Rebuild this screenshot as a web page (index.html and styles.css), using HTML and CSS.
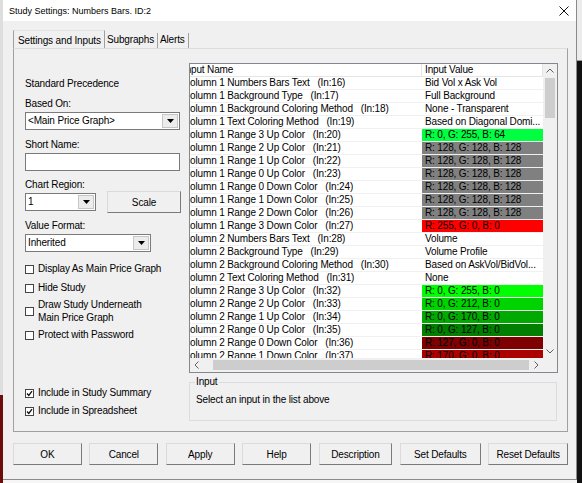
FILE: index.html
```html
<!DOCTYPE html>
<html lang="en">

<head>
    <meta charset="UTF-8">
    <title>Study Settings</title>

    <link rel="stylesheet" href="styles.css">
</head>

<body>

    <div class="window">
        <div class="titlebar">
            <span>Study Settings: Numbers Bars. ID:2</span>
            <svg class="close" width="10" height="10" viewBox="0 0 10 10">
                <path d="M0.5 0.5 L9.5 9.5 M9.5 0.5 L0.5 9.5" stroke="#111" stroke-width="1" fill="none" />
            </svg>
        </div>

        <div class="content">
            <!-- tabs -->
            <div class="tabs">
                <div class="tab active">Settings and Inputs</div>
                <div class="tab">Subgraphs</div>
                <div class="tab">Alerts</div>
            </div>

            <div class="panel">
                <!-- left column -->
                <div class="left">
                    <div class="label">Standard Precedence</div>
                    <div class="label based-on">Based On:</div>
                    <div class="combo combo-wide">
                        <span class="combo-text">&lt;Main Price Graph&gt;</span>
                        <span class="combo-btn"><svg width="7" height="4" viewBox="0 0 7 4"><polygon points="0,0 7,0 3.5,4" fill="#000" /></svg></span>
                    </div>
                    <div class="label short-name">Short Name:</div>
                    <div class="textbox"></div>
                    <div class="label chart-region">Chart Region:</div>
                    <div class="region-row">
                        <div class="combo combo-small">
                            <span class="combo-text">1</span>
                            <span class="combo-btn"><svg width="7" height="4" viewBox="0 0 7 4"><polygon points="0,0 7,0 3.5,4" fill="#000" /></svg></span>
                        </div>
                        <div class="btn scale-btn">Scale</div>
                    </div>
                    <div class="label value-format">Value Format:</div>
                    <div class="combo combo-mid">
                        <span class="combo-text">Inherited</span>
                        <span class="combo-btn"><svg width="7" height="4" viewBox="0 0 7 4"><polygon points="0,0 7,0 3.5,4" fill="#000" /></svg></span>
                    </div>

                    <div class="check first-check"><span class="box"></span>Display As Main Price Graph</div>
                    <div class="check"><span class="box"></span>Hide Study</div>
                    <div class="check two-line"><span class="box"></span><span>Draw Study Underneath<br>Main Price Graph</span></div>
                    <div class="check protect"><span class="box"></span>Protect with Password</div>

                    <div class="check summary"><span class="box"><svg width="7" height="7" viewBox="0 0 7 7"><polyline points="1,3.5 2.8,5.5 6,1.2" stroke="#111" stroke-width="1.3" fill="none" /></svg></span>Include in Study Summary</div>
                    <div class="check spreadsheet"><span class="box"><svg width="7" height="7" viewBox="0 0 7 7"><polyline points="1,3.5 2.8,5.5 6,1.2" stroke="#111" stroke-width="1.3" fill="none" /></svg></span>Include in Spreadsheet</div>
                </div>

                <!-- right column -->
                <div class="right">
                    <div class="listview">
                        <div class="list-area">
                            <div class="sheet">
                                <div class="row head">
                                    <div class="name">Input Name</div>
                                    <div class="value">Input Value</div>
                                </div>
                                <div class="row"><div class="name">Column 1 Numbers Bars Text   (In:16)</div><div class="value">Bid Vol x Ask Vol</div></div>
                                <div class="row"><div class="name">Column 1 Background Type   (In:17)</div><div class="value">Full Background</div></div>
                                <div class="row"><div class="name">Column 1 Background Coloring Method   (In:18)</div><div class="value">None - Transparent</div></div>
                                <div class="row"><div class="name">Column 1 Text Coloring Method   (In:19)</div><div class="value">Based on Diagonal Domi...</div></div>
                                <div class="row"><div class="name">Column 1 Range 3 Up Color   (In:20)</div><div class="value" style="background:#00ff40">R: 0, G: 255, B: 64</div></div>
                                <div class="row"><div class="name">Column 1 Range 2 Up Color   (In:21)</div><div class="value" style="background:#808080">R: 128, G: 128, B: 128</div></div>
                                <div class="row"><div class="name">Column 1 Range 1 Up Color   (In:22)</div><div class="value" style="background:#808080">R: 128, G: 128, B: 128</div></div>
                                <div class="row"><div class="name">Column 1 Range 0 Up Color   (In:23)</div><div class="value" style="background:#808080">R: 128, G: 128, B: 128</div></div>
                                <div class="row"><div class="name">Column 1 Range 0 Down Color   (In:24)</div><div class="value" style="background:#808080">R: 128, G: 128, B: 128</div></div>
                                <div class="row"><div class="name">Column 1 Range 1 Down Color   (In:25)</div><div class="value" style="background:#808080">R: 128, G: 128, B: 128</div></div>
                                <div class="row"><div class="name">Column 1 Range 2 Down Color   (In:26)</div><div class="value" style="background:#808080">R: 128, G: 128, B: 128</div></div>
                                <div class="row"><div class="name">Column 1 Range 3 Down Color   (In:27)</div><div class="value" style="background:#ff0000">R: 255, G: 0, B: 0</div></div>
                                <div class="row"><div class="name">Column 2 Numbers Bars Text   (In:28)</div><div class="value">Volume</div></div>
                                <div class="row"><div class="name">Column 2 Background Type   (In:29)</div><div class="value">Volume Profile</div></div>
                                <div class="row"><div class="name">Column 2 Background Coloring Method   (In:30)</div><div class="value">Based on AskVol/BidVol...</div></div>
                                <div class="row"><div class="name">Column 2 Text Coloring Method   (In:31)</div><div class="value">None</div></div>
                                <div class="row"><div class="name">Column 2 Range 3 Up Color   (In:32)</div><div class="value" style="background:#00ff00">R: 0, G: 255, B: 0</div></div>
                                <div class="row"><div class="name">Column 2 Range 2 Up Color   (In:33)</div><div class="value" style="background:#00d400">R: 0, G: 212, B: 0</div></div>
                                <div class="row"><div class="name">Column 2 Range 1 Up Color   (In:34)</div><div class="value" style="background:#00aa00">R: 0, G: 170, B: 0</div></div>
                                <div class="row"><div class="name">Column 2 Range 0 Up Color   (In:35)</div><div class="value" style="background:#007f00">R: 0, G: 127, B: 0</div></div>
                                <div class="row"><div class="name">Column 2 Range 0 Down Color   (In:36)</div><div class="value" style="background:#7f0000">R: 127, G: 0, B: 0</div></div>
                                <div class="row"><div class="name">Column 2 Range 1 Down Color   (In:37)</div><div class="value" style="background:#aa0000">R: 170, G: 0, B: 0</div></div>
                            </div>
                        </div>

                        <!-- vertical scrollbar -->
                        <div class="vscroll">
                            <div class="arrow"><svg width="14" height="14" viewBox="0 0 14 14"><polyline points="3.5,8.5 7,5 10.5,8.5" stroke="#606060" fill="none" /></svg></div>
                            <div class="vtrack"><div class="vthumb"></div></div>
                            <div class="arrow"><svg width="14" height="14" viewBox="0 0 14 14"><polyline points="3.5,5.5 7,9 10.5,5.5" stroke="#606060" fill="none" /></svg></div>
                        </div>

                        <!-- horizontal scrollbar -->
                        <div class="hscroll">
                            <div class="arrow"><svg width="14" height="14" viewBox="0 0 14 14"><polyline points="8.5,3.5 5,7 8.5,10.5" stroke="#606060" fill="none" /></svg></div>
                            <div class="htrack"><div class="hthumb"></div></div>
                            <div class="arrow"><svg width="14" height="14" viewBox="0 0 14 14"><polyline points="5.5,3.5 9,7 5.5,10.5" stroke="#606060" fill="none" /></svg></div>
                        </div>
                        <div class="corner"></div>
                    </div>

                    <fieldset class="input-group">
                        <legend>Input</legend>
                        <div class="hint">Select an input in the list above</div>
                    </fieldset>
                </div>
            </div>

            <!-- bottom buttons -->
            <div class="buttons">
                <div class="btn">OK</div>
                <div class="btn">Cancel</div>
                <div class="btn">Apply</div>
                <div class="btn">Help</div>
                <div class="btn btn-desc">Description</div>
                <div class="btn btn-set">Set Defaults</div>
                <div class="btn btn-reset">Reset Defaults</div>
            </div>
        </div>
    </div>

</body>

</html>
```

FILE: styles.css
```css
* {
    box-sizing: border-box;
}

body {
    margin: 0;
    width: 582px;
    height: 483px;
    overflow: hidden;
    font-family: "Liberation Sans", Arial, sans-serif;
    font-size: 10px;
    letter-spacing: -0.15px;
    color: #000;
    background:
        linear-gradient(#dedede 0 395px, #6e0b0b 395px) left top / 3px 100% no-repeat,
        linear-gradient(#ececec 0 60px, #9a9a9a 60px 61px, #111 61px) right top / 5px 100% no-repeat,
        #f6f6f6;
}

/* window frame */
.window {
    margin-left: 3px;
    width: 574px;
    height: 480px;
    background: #f0f0f0;
    border-right: 1px solid #8a8a8a;
    border-bottom: 1px solid #8a8a8a;
}

.titlebar {
    height: 21px;
    background: #fff;
    display: flex;
    align-items: center;
    justify-content: space-between;
    padding: 0 7px 0 6px;
    font-size: 9px;
    letter-spacing: 0;
}

.content {
    padding: 9px 8px 0 10px;
}

/* tabs */
.tabs {
    height: 18px;
    display: flex;
    align-items: flex-end;
}

.tab {
    height: 15px;
    line-height: 14px;
    padding: 0 3px 0 2px;
    border-right: 1px solid #a0a0a0;
}

.tab.active {
    width: 92px;
    height: 18px;
    line-height: 20px;
    padding-left: 4px;
    border-left: 1px solid #a0a0a0;
    border-top: 1px solid #e3e3e3;
}

/* main panel */
.panel {
    height: 384px;
    display: flex;
    gap: 8px;
    padding: 0 9px 0 11px;
    border: 1px solid #a0a0a0;
    border-top-color: #dddddd;
}

.left {
    width: 156px;
    padding-top: 29px;
    display: flex;
    flex-direction: column;
}

.label {
    line-height: 12px;
}

.based-on {
    margin-top: 8px;
}

.short-name {
    margin-top: 9px;
}

.chart-region {
    margin-top: 8px;
}

.value-format {
    margin-top: 7px;
}

.combo {
    height: 18px;
    margin-top: 2px;
    display: flex;
    background: #fff;
    border: 1px solid #7a7a7a;
}

.combo-wide {
    width: 155px;
}

.combo-small {
    width: 71px;
    margin-top: 0;
}

.combo-mid {
    width: 126px;
}

.combo-text {
    flex: 1;
    line-height: 16px;
    padding-left: 2px;
}

.combo-btn {
    width: 16px;
    display: flex;
    align-items: center;
    justify-content: center;
    margin: 1px;
    background: #ececec;
    border: 1px solid #c6c6c6;
}

.textbox {
    width: 155px;
    height: 18px;
    margin-top: 2px;
    background: #fff;
    border: 1px solid #7a7a7a;
}

.region-row {
    height: 22px;
    display: flex;
    align-items: center;
    justify-content: space-between;
}

.btn {
    display: flex;
    align-items: center;
    justify-content: center;
    background: #f0f0f0;
    border: 1px solid;
    border-color: #dadada #7a7a7a #7a7a7a #dadada;
}

.scale-btn {
    width: 74px;
    height: 22px;
}

/* checkboxes */
.check {
    display: flex;
    align-items: center;
    gap: 4px;
    line-height: 12px;
    margin-top: 7px;
}

.check .box {
    width: 9px;
    height: 9px;
    flex: none;
    display: flex;
    align-items: center;
    justify-content: center;
    background: #fff;
    border: 1px solid #444;
}

.first-check {
    margin-top: 11px;
}

.two-line {
    margin-top: 4px;
    line-height: 13px;
}

.protect {
    margin-top: 5px;
}

.summary {
    margin-top: 46px;
}

.spreadsheet {
    margin-top: 6px;
}

/* list of inputs */
.right {
    width: 369px;
    padding-top: 14px;
}

.listview {
    width: 369px;
    height: 310px;
    display: grid;
    grid-template-columns: 353px 14px;
    grid-template-rows: 294px 14px;
    border: 1px solid #828790;
    background: #fff;
}

.list-area {
    overflow: hidden;
}

.sheet {
    margin-left: -10px;
    width: 363px;
}

.row {
    height: 13px;
    display: flex;
    border-bottom: 1px solid #f0f0f0;
    line-height: 12px;
    white-space: pre;
}

.row .name {
    width: 242px;
    padding-left: 3px;
    overflow: hidden;
}

.row .value {
    width: 121px;
    padding-left: 3px;
    overflow: hidden;
}

.row.head {
    border-bottom-color: #e5e5e5;
}

.row.head .name,
.row.head .value {
    border-right: 1px solid #e5e5e5;
}

.vscroll {
    display: flex;
    flex-direction: column;
    background: #f0f0f0;
}

.arrow {
    width: 14px;
    height: 14px;
    flex: none;
}

.vtrack {
    flex: 1;
}

.vthumb {
    width: 10px;
    height: 40px;
    margin-left: 2px;
    background: #cdcdcd;
}

.hscroll {
    display: flex;
    background: #f0f0f0;
}

.htrack {
    flex: 1;
    display: flex;
    align-items: center;
}

.hthumb {
    width: 316px;
    height: 10px;
    margin-left: 9px;
    background: #cdcdcd;
}

.corner {
    background: #f0f0f0;
}

/* input info group */
.input-group {
    margin: 3px 0 0;
    padding: 0 6px 14px 5px;
    width: 368px;
    border: 1px solid #dcdcdc;
}

.input-group legend {
    padding: 0 1px;
    line-height: 12px;
}

.hint {
    margin-top: 6px;
    padding-left: 1px;
    line-height: 12px;
}

/* dialog buttons */
.buttons {
    margin-top: 11px;
    display: flex;
    gap: 7.6px;
}

.buttons .btn {
    width: 69px;
    height: 22px;
}

.buttons .btn-desc {
    width: 74px;
}

.buttons .btn-set {
    width: 81px;
}

.buttons .btn-reset {
    width: 80px;
}
```
